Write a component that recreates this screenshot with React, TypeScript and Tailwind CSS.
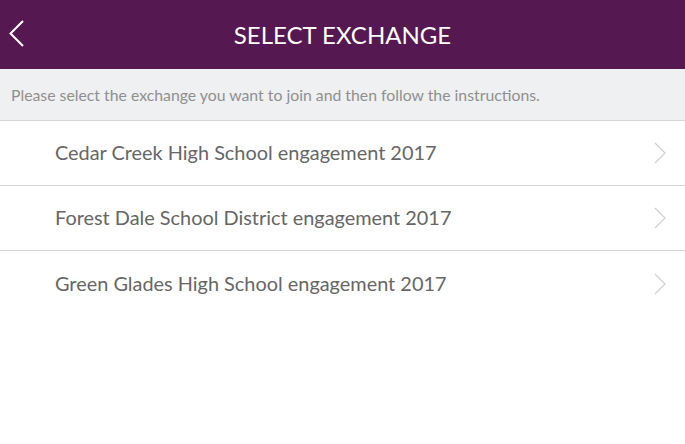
const rows = [
  "Cedar Creek High School engagement 2017",
  "Forest Dale School District engagement 2017",
  "Green Glades High School engagement 2017",
];

const App = () => {
  return (
    <div className="w-[685px] h-[444px] bg-white font-['Lato',_'Open_Sans',_sans-serif]">
      <header className="h-[69px] bg-[#561850] flex items-center justify-center relative">
        <button className="absolute left-[8px] top-[19px] w-[18px] h-[30px]">
          <svg width="18" height="30" viewBox="0 0 18 30" fill="none">
            <path d="M15 2 L2.5 14.5 L15 27" stroke="white" strokeWidth="2" />
          </svg>
        </button>
        <h1 className="text-white text-[24px] leading-none">SELECT EXCHANGE</h1>
      </header>
      <div className="h-[52px] bg-[#eff0f2] border-b border-[#d6d6d6] flex items-center pl-[11px]">
        <p className="text-[#8f8f8f] text-[15.8px]">
          Please select the exchange you want to join and then follow the instructions.
        </p>
      </div>
      <ul>
        {rows.map((r, i) => (
          <li
            key={r}
            className={`h-[65px] flex items-center justify-between pl-[55px] pr-[18px] ${
              i < rows.length - 1 ? "border-b border-[#d6d6d6]" : ""
            }`}
          >
            <span className="text-[#666] text-[19.9px]">{r}</span>
            <svg width="14" height="22" viewBox="0 0 14 22" fill="none">
              <path d="M2 1 L12 11 L2 21" stroke="#cfcfcf" strokeWidth="1.2" />
            </svg>
          </li>
        ))}
      </ul>
    </div>
  );
};

export default App;
